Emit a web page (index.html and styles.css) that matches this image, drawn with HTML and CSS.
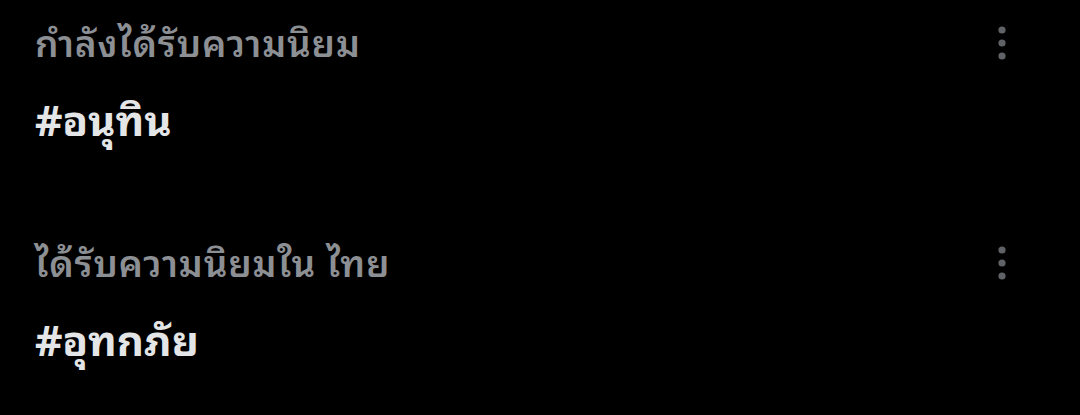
FILE: index.html
```html
<!DOCTYPE html>
<html lang="th">
<head>
<meta charset="utf-8">
<link rel="stylesheet" href="styles.css">
</head>
<body>
<ul class="trends">
  <li class="trend">
    <div class="trend-head">
      <span class="trend-label">กำลังได้รับความนิยม</span>
      <button class="more" aria-label="เพิ่มเติม">
        <svg width="8" height="34" viewBox="0 0 8 34"><circle cx="4" cy="4" r="3.6"/><circle cx="4" cy="17" r="3.6"/><circle cx="4" cy="30" r="3.6"/></svg>
      </button>
    </div>
    <div class="trend-name">#อนุทิน</div>
  </li>
  <li class="trend">
    <div class="trend-head">
      <span class="trend-label">ได้รับความนิยมใน ไทย</span>
      <button class="more" aria-label="เพิ่มเติม">
        <svg width="8" height="34" viewBox="0 0 8 34"><circle cx="4" cy="4" r="3.6"/><circle cx="4" cy="17" r="3.6"/><circle cx="4" cy="30" r="3.6"/></svg>
      </button>
    </div>
    <div class="trend-name">#อุทกภัย</div>
  </li>
</ul>
</body>
</html>
```
FILE: styles.css
```css
html, body {
  margin: 0;
  background: #000;
}
body {
  font-family: "Noto Sans Thai Looped", "Loma", "Garuda", "Noto Sans", "DejaVu Sans", sans-serif;
  width: 1080px;
  height: 415px;
  overflow: hidden;
}
.trends {
  list-style: none;
  margin: 0;
  padding: 17px 0 0 35px;
  display: flex;
  flex-direction: column;
  gap: 92px;
}
.trend {
  display: flex;
  flex-direction: column;
}
.trend-head {
  display: flex;
  justify-content: space-between;
  align-items: flex-start;
  padding-right: 74px;
}
.trend-label {
  color: #8c8f93;
  font-size: 37px;
  font-weight: 600;
  line-height: 48px;
  letter-spacing: 0.8px;
}
.more {
  background: none;
  border: 0;
  padding: 0;
  margin-top: 9px;
  fill: #5f6266;
  display: flex;
}
.trend-name {
  margin-top: 24px;
  color: #e3e5e7;
  font-size: 42px;
  font-weight: 700;
  line-height: 56px;
}
```
